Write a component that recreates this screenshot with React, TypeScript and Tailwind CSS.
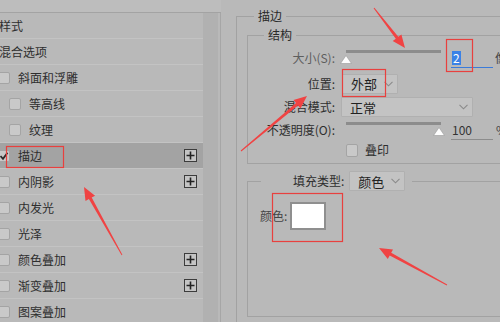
import React from "react";

const FONT = { fontFamily: '"Noto Sans CJK SC", "Noto Sans", sans-serif' };

function Check({ checked = false, className = "" }: { checked?: boolean; className?: string }) {
  return (
    <div
      className={`w-[12px] h-[12px] rounded-[2px] border border-[#a4a4a4] bg-[#c9c9c9] flex items-center justify-center shrink-0 ${className}`}
    >
      {checked && (
        <svg width="10" height="10" viewBox="0 0 10 10">
          <path d="M1.5 5 L4 7.8 L8.5 1.8" stroke="#2a2a2a" strokeWidth="1.8" fill="none" />
        </svg>
      )}
    </div>
  );
}

function Plus() {
  return (
    <div className="w-[13px] h-[13px] border border-[#3c3c3c] bg-[#c4c4c4] flex items-center justify-center">
      <svg width="9" height="9" viewBox="0 0 9 9">
        <path d="M4.5 0.5 V8.5 M0.5 4.5 H8.5" stroke="#222" strokeWidth="1.6" />
      </svg>
    </div>
  );
}

type Row = { label: string; check?: "none" | "out" | "in"; checked?: boolean; plus?: boolean; selected?: boolean };

const rows: Row[] = [
  { label: "样式", check: "none" },
  { label: "混合选项", check: "none" },
  { label: "斜面和浮雕", check: "out" },
  { label: "等高线", check: "in" },
  { label: "纹理", check: "in" },
  { label: "描边", check: "out", checked: true, plus: true, selected: true },
  { label: "内阴影", check: "out", plus: true },
  { label: "内发光", check: "out" },
  { label: "光泽", check: "out" },
  { label: "颜色叠加", check: "out", plus: true },
  { label: "渐变叠加", check: "out", plus: true },
  { label: "图案叠加", check: "out" },
];

function Chevron() {
  return (
    <svg width="9" height="6" viewBox="0 0 9 6">
      <path d="M0.5 0.8 L4.5 4.8 L8.5 0.8" stroke="#8a8a8a" strokeWidth="1.1" fill="none" />
    </svg>
  );
}

function arrowPath(x1: number, y1: number, x2: number, y2: number) {
  const dx = x2 - x1;
  const dy = y2 - y1;
  const len = Math.hypot(dx, dy);
  const ux = dx / len;
  const uy = dy / len;
  const px = -uy;
  const py = ux;
  const headL = 13;
  const headW = 5.5;
  const bx = x2 - ux * headL;
  const by = y2 - uy * headL;
  const t0 = 0.5;
  const t1 = 1.6;
  const pts = [
    [x1 + px * t0, y1 + py * t0],
    [bx + px * t1, by + py * t1],
    [bx + px * headW, by + py * headW],
    [x2, y2],
    [bx - px * headW, by - py * headW],
    [bx - px * t1, by - py * t1],
    [x1 - px * t0, y1 - py * t0],
  ];
  return pts.map((p) => `${p[0].toFixed(1)},${p[1].toFixed(1)}`).join(" ");
}

export default function App() {
  return (
    <div
      className="relative w-[500px] h-[322px] overflow-hidden bg-[#b9b9b9] text-[12px] text-[#2e2e2e] flex"
      style={FONT}
    >
      {/* Left list */}
      <div className="w-[221px] shrink-0 flex flex-col">
        <div className="h-[13px] shrink-0 border-b border-[#a3a3a3] bg-[#bdbdbd]" />
        <div className="flex flex-1 border-r border-[#a6a6a6]">
          <div className="w-[203px] shrink-0 flex flex-col">
            {rows.map((r, i) => (
              <div
                key={i}
                className={`h-[26px] shrink-0 flex items-center border-b border-[#c3c3c3] ${
                  r.selected ? "bg-[#a3a3a3]" : "bg-[#b9b9b9]"
                }`}
              >
                {r.check === "none" && <span className="ml-[-1px] leading-none">{r.label}</span>}
                {r.check === "out" && (
                  <>
                    <Check checked={r.checked} className="ml-[-2px]" />
                    <span className="ml-[8px] leading-none">{r.label}</span>
                  </>
                )}
                {r.check === "in" && (
                  <>
                    <Check className="ml-[9px]" />
                    <span className="ml-[8px] leading-none">{r.label}</span>
                  </>
                )}
                <div className="flex-1" />
                {r.plus && (
                  <div className="mr-[6px]">
                    <Plus />
                  </div>
                )}
              </div>
            ))}
          </div>
          <div className="w-[15px] shrink-0 bg-[#b1b1b1]" />
        </div>
      </div>

      {/* Right panel */}
      <div className="flex-1 min-w-0">
        <fieldset className="mt-[7px] ml-[15px] w-[320px] h-[340px] border border-[#a2a2a2]">
          <legend className="ml-[17px] px-[4px] leading-[18px] text-[#2a2a2a]">描边</legend>

          <fieldset className="mt-[1px] ml-[10px] w-[300px] h-[138px] border border-[#a2a2a2] overflow-hidden">
            <legend className="ml-[16px] px-[4px] leading-[18px] text-[#2a2a2a]">结构</legend>

            <div className="flex flex-col pt-[2px]">
              {/* size */}
              <div className="flex items-center h-[24px]">
                <div className="w-[87px] text-right text-[#5e5e5e] leading-none">大小(S):</div>
                <div className="ml-[11px] w-[95px] flex flex-col">
                  <div className="h-[3px] bg-[#8c8c8c] mt-[-2px]" />
                  <svg width="12" height="9" viewBox="0 0 12 9" className="ml-[-6px] mt-[2px]">
                    <path d="M6 0.5 L11.5 8.5 L0.5 8.5 Z" fill="#fdfdfd" stroke="#9a9a9a" strokeWidth="0.6" />
                  </svg>
                </div>
                <div className="ml-[10px] w-[42px] h-[20px] border-b border-[#3b7bd9] flex items-center">
                  <span className="ml-[1px] bg-[#3b82e6] text-white leading-[14px] px-[1px]">2</span>
                </div>
                <span className="ml-[2px] text-[#444]">像素</span>
              </div>

              {/* position */}
              <div className="flex items-center h-[25px] mt-[1px]">
                <div className="w-[87px] text-right leading-none">位置:</div>
                <div className="ml-[7px] w-[56px] h-[20px] bg-[#c3c3c3] border border-[#b0b0b0] rounded-[1px] flex items-center justify-between pl-[8px] pr-[4px]">
                  <span className="text-[13px] text-[#222] leading-none">外部</span>
                  <Chevron />
                </div>
              </div>

              {/* blend mode */}
              <div className="flex items-center h-[22px]">
                <div className="w-[87px] text-right leading-none">混合模式:</div>
                <div className="ml-[6px] w-[132px] h-[20px] bg-[#c3c3c3] border border-[#b0b0b0] rounded-[1px] flex items-center justify-between pl-[8px] pr-[4px]">
                  <span className="text-[13px] text-[#222] leading-none">正常</span>
                  <Chevron />
                </div>
              </div>

              {/* opacity */}
              <div className="flex items-center h-[24px]">
                <div className="w-[87px] text-right leading-none">不透明度(O):</div>
                <div className="ml-[11px] w-[95px] flex flex-col">
                  <div className="h-[3px] bg-[#8c8c8c] mt-[-2px]" />
                  <svg width="12" height="9" viewBox="0 0 12 9" className="ml-[87px] mt-[2px]">
                    <path d="M6 0.5 L11.5 8.5 L0.5 8.5 Z" fill="#fdfdfd" stroke="#9a9a9a" strokeWidth="0.6" />
                  </svg>
                </div>
                <div className="ml-[10px] w-[42px] h-[20px] border-b border-[#8c8c8c] flex items-center">
                  <span className="ml-[1px] leading-none text-[#333]">100</span>
                </div>
                <span className="ml-[3px] text-[#444]">%</span>
              </div>

              {/* overprint */}
              <div className="flex items-center h-[16px]">
                <Check className="ml-[98px] w-[12px] h-[13px]" />
                <span className="ml-[7px] leading-none">叠印</span>
              </div>
            </div>
          </fieldset>

          <fieldset className="mt-[7px] ml-[10px] w-[300px] h-[146px] border border-[#a2a2a2]">
            <legend className="ml-[13px] pl-[32px] pr-[7px] flex items-center">
              <span className="leading-none">填充类型:</span>
              <div className="ml-[5px] w-[56px] h-[20px] bg-[#c3c3c3] border border-[#b0b0b0] rounded-[1px] flex items-center justify-between pl-[8px] pr-[4px]">
                <span className="text-[13px] text-[#222] leading-none">颜色</span>
                <Chevron />
              </div>
            </legend>
            <div className="flex items-center mt-[11px] ml-[12px]">
              <span className="leading-none text-[#444]">颜色:</span>
              <div className="ml-[3px] w-[36px] h-[28px] bg-white border-2 border-[#8f8f8f]" />
            </div>
          </fieldset>
        </fieldset>
      </div>

      {/* Annotations */}
      <svg className="absolute inset-0 pointer-events-none" width="500" height="322" viewBox="0 0 500 322">
        <g fill="none" stroke="#e8403e" strokeWidth="1.2">
          <rect x="6.5" y="146.5" width="57" height="21" />
          <rect x="446.5" y="39.5" width="26" height="32" />
          <rect x="342.5" y="69.5" width="43" height="27" />
          <rect x="272.5" y="193.5" width="70" height="48" />
        </g>
        <g fill="#f04343">
          <polygon points={arrowPath(374, 8, 405, 48)} />
          <polygon points={arrowPath(241, 151, 307, 96)} />
          <polygon points={arrowPath(122, 255, 84, 187)} />
          <polygon points={arrowPath(447, 285, 379, 248)} />
        </g>
      </svg>
    </div>
  );
}
